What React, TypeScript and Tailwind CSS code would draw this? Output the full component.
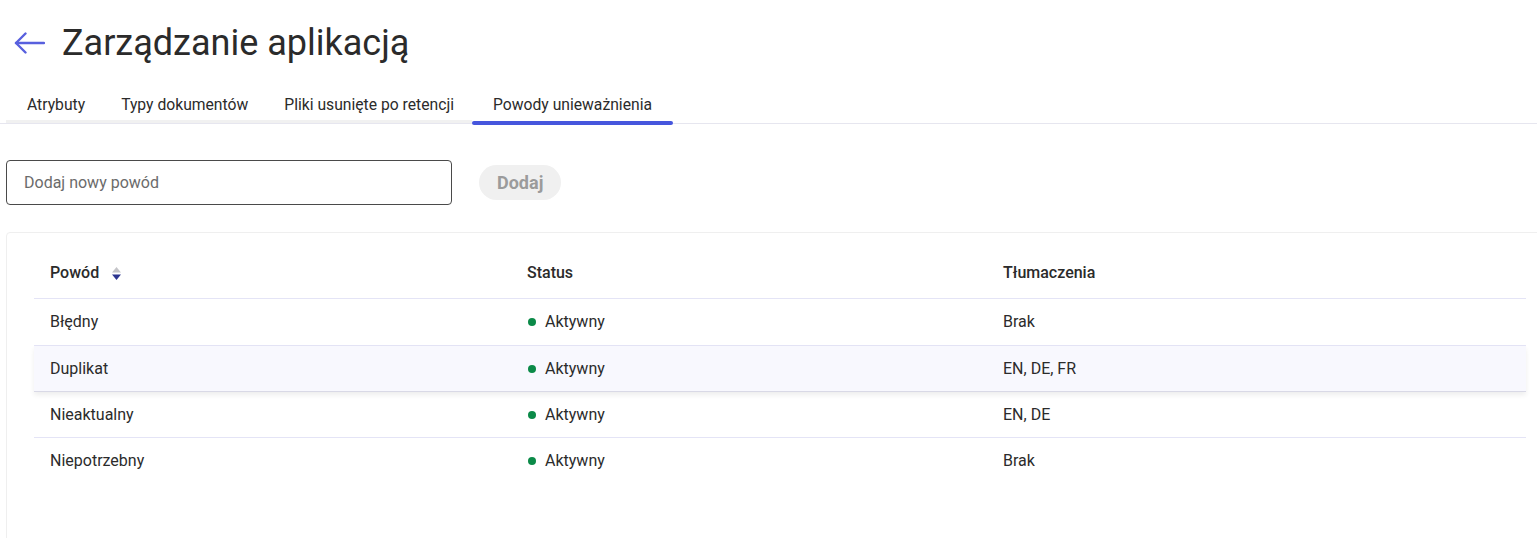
import { useState } from 'react';

const tabs = ['Atrybuty', 'Typy dokumentów', 'Pliki usunięte po retencji', 'Powody unieważnienia'];

const reasons = [
  { name: 'Błędny', status: 'Aktywny', translations: 'Brak' },
  { name: 'Duplikat', status: 'Aktywny', translations: 'EN, DE, FR' },
  { name: 'Nieaktualny', status: 'Aktywny', translations: 'EN, DE' },
  { name: 'Niepotrzebny', status: 'Aktywny', translations: 'Brak' },
];

function SortIcon() {
  return (
    <svg width="11" height="13" viewBox="0 0 11 13" className="ml-[12px]">
      <path d="M5.5 0 L10 5.5 H1 Z" fill="#c4c4c8" />
      <path d="M1 7.5 H10 L5.5 13 Z" fill="#2c3590" />
    </svg>
  );
}

function tabClass(i: number, active: number) {
  if (i === active) return 'relative px-[21px] pt-[7px] text-[15.7px]';
  if (i === 0) return 'relative pl-[21px] pr-[18px] pt-[7px] text-[15.7px]';
  return 'relative px-[18px] pt-[7px] text-[15.7px]';
}

function rowClass(i: number, hovered: number, last: number) {
  const base = 'grid grid-cols-[477px_476px_1fr] items-center text-[16px]';
  if (i === hovered) return base + ' relative h-[46px] bg-[#f8f8fe] border-b border-[#d9d9e6] shadow-[0_3px_5px_rgba(0,0,0,0.07)]';
  if (i === 0) return base + ' h-[47px] border-b border-[#e4e4f6]';
  if (i === last) return base + ' h-[46px]';
  return base + ' h-[46px] border-b border-[#e4e4f6]';
}

export default function App() {
  const [active] = useState(3);
  const hovered = 1;

  return (
    <div className="w-[1537px] h-[538px] overflow-hidden bg-white text-[#2b2b2b] font-['Roboto',sans-serif]">
      {/* Header */}
      <div className="flex items-center h-[86px] pl-[14px] pb-[1px]">
        <svg width="31" height="22" viewBox="0 0 31 22" fill="none" stroke="#5860de" strokeWidth="2.4" strokeLinecap="round" strokeLinejoin="round">
          <path d="M30 11 H2" />
          <path d="M11.5 1.5 L2 11 L11.5 20.5" />
        </svg>
        <h1 className="ml-[17px] text-[36px] leading-none font-normal">Zarządzanie aplikacją</h1>
      </div>

      {/* Tabs */}
      <div className="flex pl-[6px] border-b border-[#e6e6ef] h-[38px]">
        {tabs.map((t, i) => (
          <div key={t} className={tabClass(i, active)}>
            {t}
            {i === active ? (
              <div className="absolute left-0 right-0 bottom-[-2px] h-[4px] rounded-full bg-[#4656dd]" />
            ) : (
              <div className="absolute left-0 right-0 bottom-0 h-[3px] bg-[#f1f1f1]" />
            )}
          </div>
        ))}
      </div>

      {/* Add form */}
      <div className="flex items-center pl-[6px] mt-[36px] gap-[27px]">
        <div className="w-[446px] h-[45px] border border-[#4a4a4a] rounded-[4px] flex items-center px-[17px] text-[16px] text-[#6b6b6b]">
          Dodaj nowy powód
        </div>
        <button className="h-[35px] px-[18px] rounded-full bg-[#f0f0f0] text-[#9b9b9b] text-[18px] font-bold">
          Dodaj
        </button>
      </div>

      {/* Table card */}
      <div className="ml-[6px] mt-[27px] w-[1548px] h-[320px] border border-[#efefef] rounded-[4px] pt-[15px] px-[27px]">
        <div className="grid grid-cols-[477px_476px_1fr] h-[51px] items-center border-b border-[#e4e4f6] text-[16px] font-medium">
          <div className="pl-[16px] flex items-center">
            Powód
            <SortIcon />
          </div>
          <div className="pl-[16px]">Status</div>
          <div className="pl-[16px]">Tłumaczenia</div>
        </div>
        {reasons.map((r, i) => (
          <div key={r.name} className={rowClass(i, hovered, reasons.length - 1)}>
            <div className="pl-[16px]">{r.name}</div>
            <div className="pl-[17px] flex items-center gap-[9px]">
              <span className="w-[8px] h-[8px] rounded-full bg-[#0b8a48]" />
              {r.status}
            </div>
            <div className="pl-[16px]">{r.translations}</div>
          </div>
        ))}
      </div>
    </div>
  );
}
